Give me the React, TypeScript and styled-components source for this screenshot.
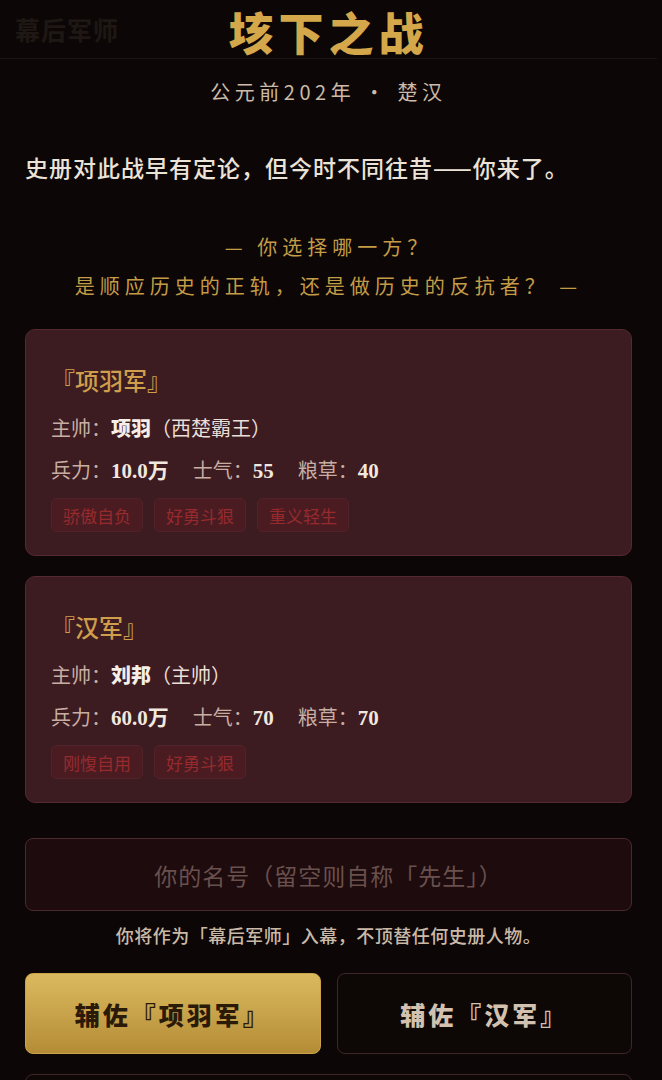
import React from "react";
import styled, { createGlobalStyle } from "styled-components";

const GlobalStyle = createGlobalStyle`
  html, body {
    margin: 0;
    padding: 0;
    background: #0c0706;
  }
  body {
    font-family: "Noto Sans CJK SC", "Noto Sans", sans-serif;
    color: #e8ddd2;
  }
  * {
    box-sizing: border-box;
  }
`;

const Page = styled.div`
  width: 662px;
  min-height: 1080px;
  padding-right: 5px;
  background: #0c0706;
  overflow: hidden;
`;

const Header = styled.header`
  display: grid;
  grid-template-columns: 1fr auto 1fr;
  align-items: center;
  height: 59px;
  padding: 0 15px;
  border-bottom: 1px solid #1d1411;
`;

const Brand = styled.div`
  font-size: 25px;
  font-weight: 700;
  color: #1f1714;
  letter-spacing: 1px;
`;

const Title = styled.h1`
  margin: 0;
  padding-top: 6px;
  font-size: 45px;
  font-weight: 900;
  line-height: 1.1;
  letter-spacing: 5px;
  color: #d4a74a;
`;

const Main = styled.main`
  display: flex;
  flex-direction: column;
  padding: 0 25px;
`;

const Era = styled.div`
  margin-top: 18px;
  text-align: center;
  font-size: 20px;
  line-height: 30px;
  letter-spacing: 4.5px;
  color: #cbbba8;
`;

const Intro = styled.p`
  margin: 43px 0 0;
  font-size: 23px;
  line-height: 34px;
  font-weight: 500;
  letter-spacing: 1px;
  color: #ece3d8;
`;

const Question = styled.p`
  margin: 43px 0 0;
  text-align: center;
  font-size: 20px;
  line-height: 39px;
  letter-spacing: 5px;
  color: #c59c46;
`;

const FactionCard = styled.section<{ $first?: boolean }>`
  display: flex;
  flex-direction: column;
  margin-top: ${({ $first }) => ($first ? "24px" : "20px")};
  padding: 32px 25px 23px;
  background: #3c1b21;
  border: 1px solid #55292f;
  border-radius: 10px;
  font-family: "Liberation Serif", "Noto Sans CJK SC", serif;
`;

const FactionName = styled.h2`
  margin: 0;
  font-size: 24px;
  line-height: 36px;
  font-weight: 500;
  color: #cf9f4c;
  font-family: "Noto Sans CJK SC", sans-serif;
`;

const InfoLine = styled.div<{ $gap: number }>`
  display: flex;
  align-items: baseline;
  gap: 24px;
  margin-top: ${({ $gap }) => $gap}px;
  font-size: 20px;
  line-height: 30px;
`;

const Stat = styled.span`
  display: inline-flex;
  align-items: baseline;
`;

const Label = styled.span`
  color: #c8aea2;
  font-family: "Noto Sans CJK SC", sans-serif;
  font-size: 20px;
`;

const Value = styled.span`
  color: #f1e8df;
  font-weight: 700;
  font-size: 21px;
`;

const Aside = styled.span`
  color: #eadfd6;
  font-family: "Noto Sans CJK SC", sans-serif;
  font-size: 20px;
`;

const LeaderName = styled.span`
  color: #f6efe8;
  font-weight: 900;
  font-family: "Noto Sans CJK SC", sans-serif;
  font-size: 20px;
`;

const Tags = styled.div`
  display: flex;
  gap: 11px;
  margin-top: 12px;
`;

const Tag = styled.span`
  display: inline-flex;
  align-items: center;
  height: 34px;
  padding: 0 11px;
  background: #4a1c22;
  border: 1px solid #50222a;
  border-radius: 5px;
  font-family: "Noto Sans CJK SC", sans-serif;
  font-size: 17px;
  color: #962a2d;
`;

const NameInput = styled.input`
  margin-top: 35px;
  height: 73px;
  width: 100%;
  background: #1d0b0e;
  border: 1px solid #4a2a2e;
  border-radius: 8px;
  text-align: center;
  font-family: "Noto Sans CJK SC", sans-serif;
  font-size: 23px;
  letter-spacing: 1px;
  color: #e8ddd2;
  outline: none;

  &::placeholder {
    color: #6a504d;
  }
`;

const Note = styled.p`
  margin: 9px 0 0;
  text-align: center;
  font-size: 18px;
  line-height: 30px;
  font-weight: 500;
  letter-spacing: 0.5px;
  color: #cbb9a8;
`;

const ChoiceRow = styled.div`
  display: grid;
  grid-template-columns: 1fr 1fr;
  gap: 16px;
  margin-top: 23px;
`;

const ChoiceButton = styled.button<{ $primary?: boolean }>`
  height: 81px;
  border-radius: 8px;
  font-family: "Noto Sans CJK SC", sans-serif;
  font-size: 25px;
  font-weight: 900;
  letter-spacing: 3px;
  cursor: pointer;
  border: 1px solid ${({ $primary }) => ($primary ? "#c9a24a" : "#3f2629")};
  background: ${({ $primary }) =>
    $primary ? "linear-gradient(180deg, #dbba5f 0%, #b48c36 100%)" : "#0d0706"};
  color: ${({ $primary }) => ($primary ? "#2b1a08" : "#d2c1ae")};
`;

const MoreBox = styled.div`
  margin-top: 20px;
  height: 70px;
  border: 1px solid #3f2629;
  border-radius: 8px;
  background: #0d0706;
`;

type Faction = {
  name: string;
  leader: string;
  title: string;
  troops: string;
  morale: number;
  food: number;
  traits: string[];
};

const factions: Faction[] = [
  {
    name: "项羽军",
    leader: "项羽",
    title: "（西楚霸王）",
    troops: "10.0万",
    morale: 55,
    food: 40,
    traits: ["骄傲自负", "好勇斗狠", "重义轻生"],
  },
  {
    name: "汉军",
    leader: "刘邦",
    title: "（主帅）",
    troops: "60.0万",
    morale: 70,
    food: 70,
    traits: ["刚愎自用", "好勇斗狠"],
  },
];

export default function App() {
  return (
    <Page>
      <GlobalStyle />
      <Header>
        <Brand>幕后军师</Brand>
        <Title>垓下之战</Title>
        <div />
      </Header>
      <Main>
        <Era>公元前202年 · 楚汉</Era>
        <Intro>史册对此战早有定论，但今时不同往昔——你来了。</Intro>
        <Question>
          — 你选择哪一方？
          <br />
          是顺应历史的正轨，还是做历史的反抗者？ —
        </Question>

        {factions.map((f, i) => (
          <FactionCard key={f.name} $first={i === 0}>
            <FactionName>『{f.name}』</FactionName>
            <InfoLine $gap={15}>
              <Stat>
                <Label>主帅：</Label>
                <LeaderName>{f.leader}</LeaderName>
                <Aside>{f.title}</Aside>
              </Stat>
            </InfoLine>
            <InfoLine $gap={12}>
              <Stat>
                <Label>兵力：</Label>
                <Value>{f.troops}</Value>
              </Stat>
              <Stat>
                <Label>士气：</Label>
                <Value>{f.morale}</Value>
              </Stat>
              <Stat>
                <Label>粮草：</Label>
                <Value>{f.food}</Value>
              </Stat>
            </InfoLine>
            <Tags>
              {f.traits.map((t) => (
                <Tag key={t}>{t}</Tag>
              ))}
            </Tags>
          </FactionCard>
        ))}

        <NameInput placeholder="你的名号（留空则自称「先生」）" />
        <Note>你将作为「幕后军师」入幕，不顶替任何史册人物。</Note>

        <ChoiceRow>
          <ChoiceButton $primary>辅佐『项羽军』</ChoiceButton>
          <ChoiceButton>辅佐『汉军』</ChoiceButton>
        </ChoiceRow>
        <MoreBox />
      </Main>
    </Page>
  );
}
